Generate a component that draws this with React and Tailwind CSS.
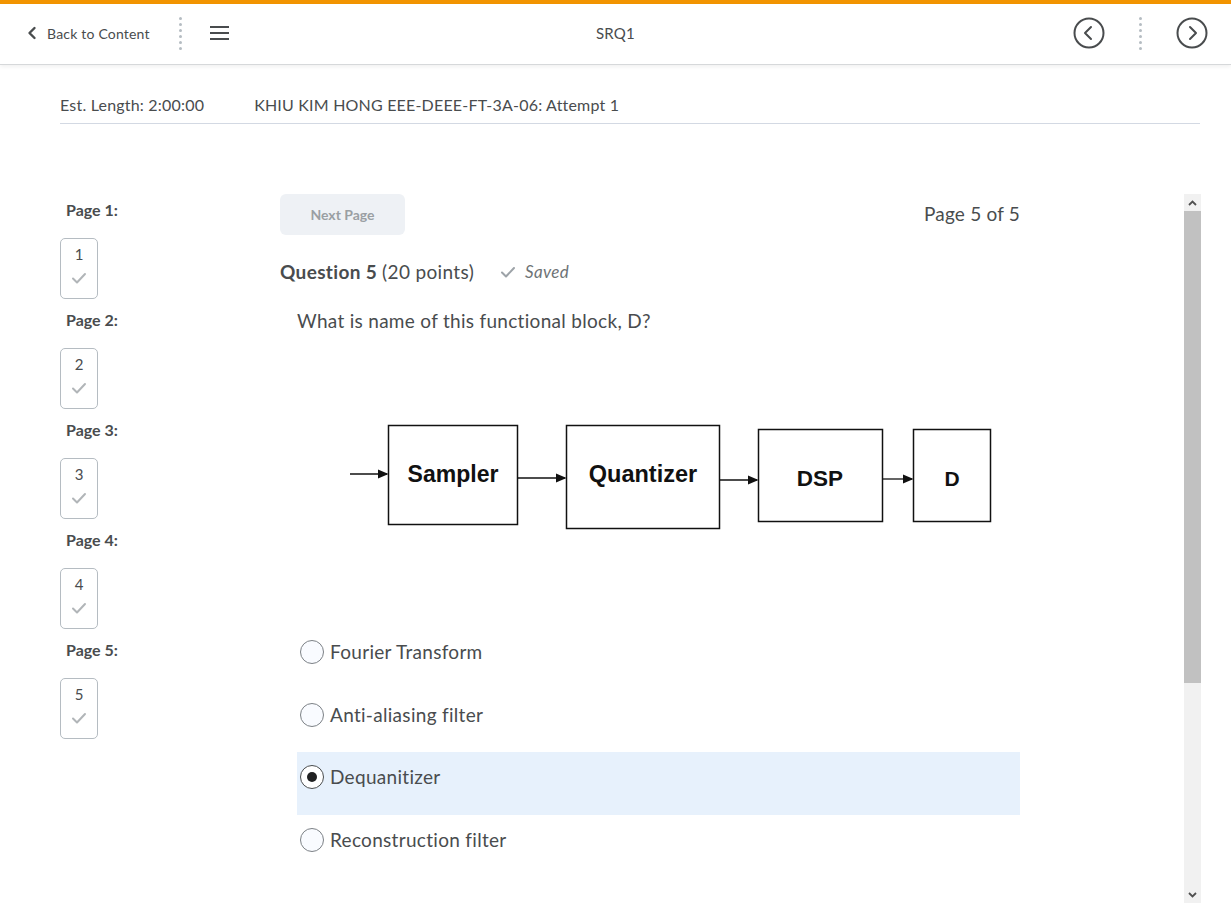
import { useState } from "react";

const options = [
  "Fourier Transform",
  "Anti-aliasing filter",
  "Dequanitizer",
  "Reconstruction filter",
];

function CircleNav({ dir }) {
  return (
    <svg width="32" height="32" viewBox="0 0 32 32" fill="none">
      <circle cx="16" cy="16" r="14.5" stroke="#494c4e" strokeWidth="2" />
      {dir === "left" ? (
        <path d="M18 10l-6 6 6 6" stroke="#494c4e" strokeWidth="2" strokeLinecap="round" strokeLinejoin="round" />
      ) : (
        <path d="M14 10l6 6-6 6" stroke="#494c4e" strokeWidth="2" strokeLinecap="round" strokeLinejoin="round" />
      )}
    </svg>
  );
}

function Dots() {
  return (
    <div className="flex flex-col gap-[3px]">
      {[0, 1, 2, 3, 4, 5].map((i) => (
        <div key={i} className="w-[3px] h-[3px] rounded-full bg-[#b5bcc2]" />
      ))}
    </div>
  );
}

function Check({ color = "#b1b5b8" }) {
  return (
    <svg width="16" height="12" viewBox="0 0 16 12" fill="none">
      <path d="M2 6.5l4 4 8-8.5" stroke={color} strokeWidth="2" strokeLinecap="round" strokeLinejoin="round" />
    </svg>
  );
}

function Diagram() {
  const box = { fill: "#fff", stroke: "#111", strokeWidth: 1.5 };
  const txt = {
    fontFamily: "'Liberation Sans', Arial, sans-serif",
    fontWeight: 700,
    fill: "#111",
    textAnchor: "middle",
  };
  return (
    <svg width="660" height="120" viewBox="0 0 660 120">
      <defs>
        <marker id="ah" markerWidth="8" markerHeight="8" refX="7" refY="4" orient="auto">
          <path d="M0 0.5L8 4 0 7.5z" fill="#111" />
        </marker>
      </defs>
      <line x1="5" y1="60" x2="42" y2="60" stroke="#111" strokeWidth="1.3" markerEnd="url(#ah)" />
      <rect x="43.5" y="11.5" width="129" height="99" {...box} />
      <text x="108" y="68" fontSize="23" {...txt}>Sampler</text>
      <line x1="173" y1="64" x2="220" y2="64" stroke="#111" strokeWidth="1.3" markerEnd="url(#ah)" />
      <rect x="221.5" y="11.5" width="153" height="103" {...box} />
      <text x="298" y="68" fontSize="23.5" {...txt}>Quantizer</text>
      <line x1="375" y1="66" x2="412" y2="66" stroke="#111" strokeWidth="1.3" markerEnd="url(#ah)" />
      <rect x="413.5" y="15.5" width="124" height="92" {...box} />
      <text x="475" y="72" fontSize="22.5" {...txt}>DSP</text>
      <line x1="538" y1="65" x2="567" y2="65" stroke="#111" strokeWidth="1.3" markerEnd="url(#ah)" />
      <rect x="568.5" y="15.5" width="77" height="92" {...box} />
      <text x="607" y="72" fontSize="21" {...txt}>D</text>
    </svg>
  );
}

export default function App() {
  const [selected, setSelected] = useState(2);

  return (
    <div
      className="w-[1231px] h-[921px] bg-white text-[#494c4e] overflow-hidden flex flex-col"
      style={{ fontFamily: "Lato, 'Noto Sans', sans-serif" }}
    >
      {/* Header */}
      <div className="h-[4px] bg-[#f29400]" />
      <div className="h-[61px] grid grid-cols-[1fr_auto_1fr] items-center pb-[2px] px-[26px] border-b border-[#d6d8da] shadow-[0_2px_4px_rgba(0,0,0,0.06)]">
        <div className="flex items-center">
          <div className="flex items-center gap-[9px] text-[14px] tracking-[0.2px]">
            <svg width="12" height="14" viewBox="0 0 12 14" fill="none">
              <path d="M8.5 2L3.5 7l5 5" stroke="#494c4e" strokeWidth="2.4" strokeLinecap="round" strokeLinejoin="round" />
            </svg>
            <span>Back to Content</span>
          </div>
          <div className="ml-[29px]">
            <Dots />
          </div>
          <div className="ml-[28px] flex flex-col gap-[4px]">
            <div className="w-[19px] h-[2px] bg-[#494c4e]" />
            <div className="w-[19px] h-[2px] bg-[#494c4e]" />
            <div className="w-[19px] h-[2px] bg-[#494c4e]" />
          </div>
        </div>
        <div className="text-center text-[15px] tracking-[0.2px]">SRQ1</div>
        <div className="flex items-center justify-end gap-[18px] mr-[-3px]">
          <CircleNav dir="left" />
          <div className="mx-[16px]">
            <Dots />
          </div>
          <CircleNav dir="right" />
        </div>
      </div>

      {/* Info row */}
      <div className="ml-[60px] mr-[31px] mt-[29px] h-[30px] flex items-center gap-[50px] border-b border-[#d3d9e3] pb-[8px] text-[16px] tracking-[0.2px]">
        <span>Est. Length: 2:00:00</span>
        <span>KHIU KIM HONG EEE-DEEE-FT-3A-06: Attempt 1</span>
      </div>

      {/* Body */}
      <div className="mt-[70px] ml-[60px] flex flex-1">
        {/* Sidebar */}
        <div className="w-[220px] pt-[5px] flex flex-col">
          {[1, 2, 3, 4, 5].map((n) => (
            <div key={n} className="flex flex-col h-[110px]">
              <div className="pl-[6px] text-[16px] font-bold leading-[22px]">Page {n}:</div>
              <div className="mt-[17px] w-[38px] h-[61px] border border-[#b5bcc2] rounded-[5px] flex flex-col items-center pt-[5px] gap-[8px]">
                <span className="text-[15px] leading-[20px]">{n}</span>
                <Check />
              </div>
            </div>
          ))}
        </div>

        {/* Main */}
        <div className="w-[740px] flex flex-col">
          <div className="flex items-center justify-between">
            <button className="w-[125px] h-[41px] rounded-[6px] bg-[#eef1f5] text-[#9a9fa3] text-[14px] font-bold">
              Next Page
            </button>
            <span className="text-[19px] tracking-[0.2px]">Page 5 of 5</span>
          </div>

          <div className="mt-[24px] flex items-center text-[19px] tracking-[0.35px] leading-[26px]">
            <span className="font-bold">Question 5</span>
            <span className="ml-[5px]">(20 points)</span>
            <span className="ml-[26px] flex items-center gap-[9px] text-[17px] italic text-[#6e7376]">
              <Check color="#9da3a8" />
              Saved
            </span>
          </div>

          <div className="mt-[23px] pl-[17px] text-[19px] tracking-[0.3px] leading-[26px]">
            What is name of this functional block, D?
          </div>

          <div className="mt-[80px] pl-[65px]">
            <Diagram />
          </div>

          <div className="mt-[93px] pl-[17px] flex flex-col">
            {options.map((opt, i) => (
              <label
                key={opt}
                onClick={() => setSelected(i)}
                className={`h-[62.5px] flex items-start pt-[12px] pl-[3px] gap-[6px] cursor-pointer ${
                  selected === i ? "bg-[#e7f1fc]" : ""
                }`}
              >
                <span
                  className={`mt-[1px] w-[24px] h-[24px] rounded-full border flex items-center justify-center ${
                    selected === i ? "border-[#494c4e] bg-white" : "border-[#7c8186] bg-[#f9fbff]"
                  }`}
                >
                  {selected === i && <span className="w-[10px] h-[10px] rounded-full bg-[#202122]" />}
                </span>
                <span className="text-[19px] tracking-[0.3px] leading-[26px]">{opt}</span>
              </label>
            ))}
          </div>
        </div>

        <div className="flex-1" />

        {/* Scrollbar */}
        <div className="w-[17px] mr-[30px] bg-[#f1f1f1] flex flex-col mb-[18px]">
          <div className="h-[17px] flex items-center justify-center">
            <svg width="9" height="6" viewBox="0 0 9 6">
              <path d="M1 5l3.5-3.5L8 5" stroke="#505050" strokeWidth="1.8" fill="none" />
            </svg>
          </div>
          <div className="h-[472px] bg-[#c1c1c1]" />
          <div className="flex-1" />
          <div className="h-[17px] flex items-center justify-center">
            <svg width="9" height="6" viewBox="0 0 9 6">
              <path d="M1 1l3.5 3.5L8 1" stroke="#505050" strokeWidth="1.8" fill="none" />
            </svg>
          </div>
        </div>
      </div>
    </div>
  );
}
